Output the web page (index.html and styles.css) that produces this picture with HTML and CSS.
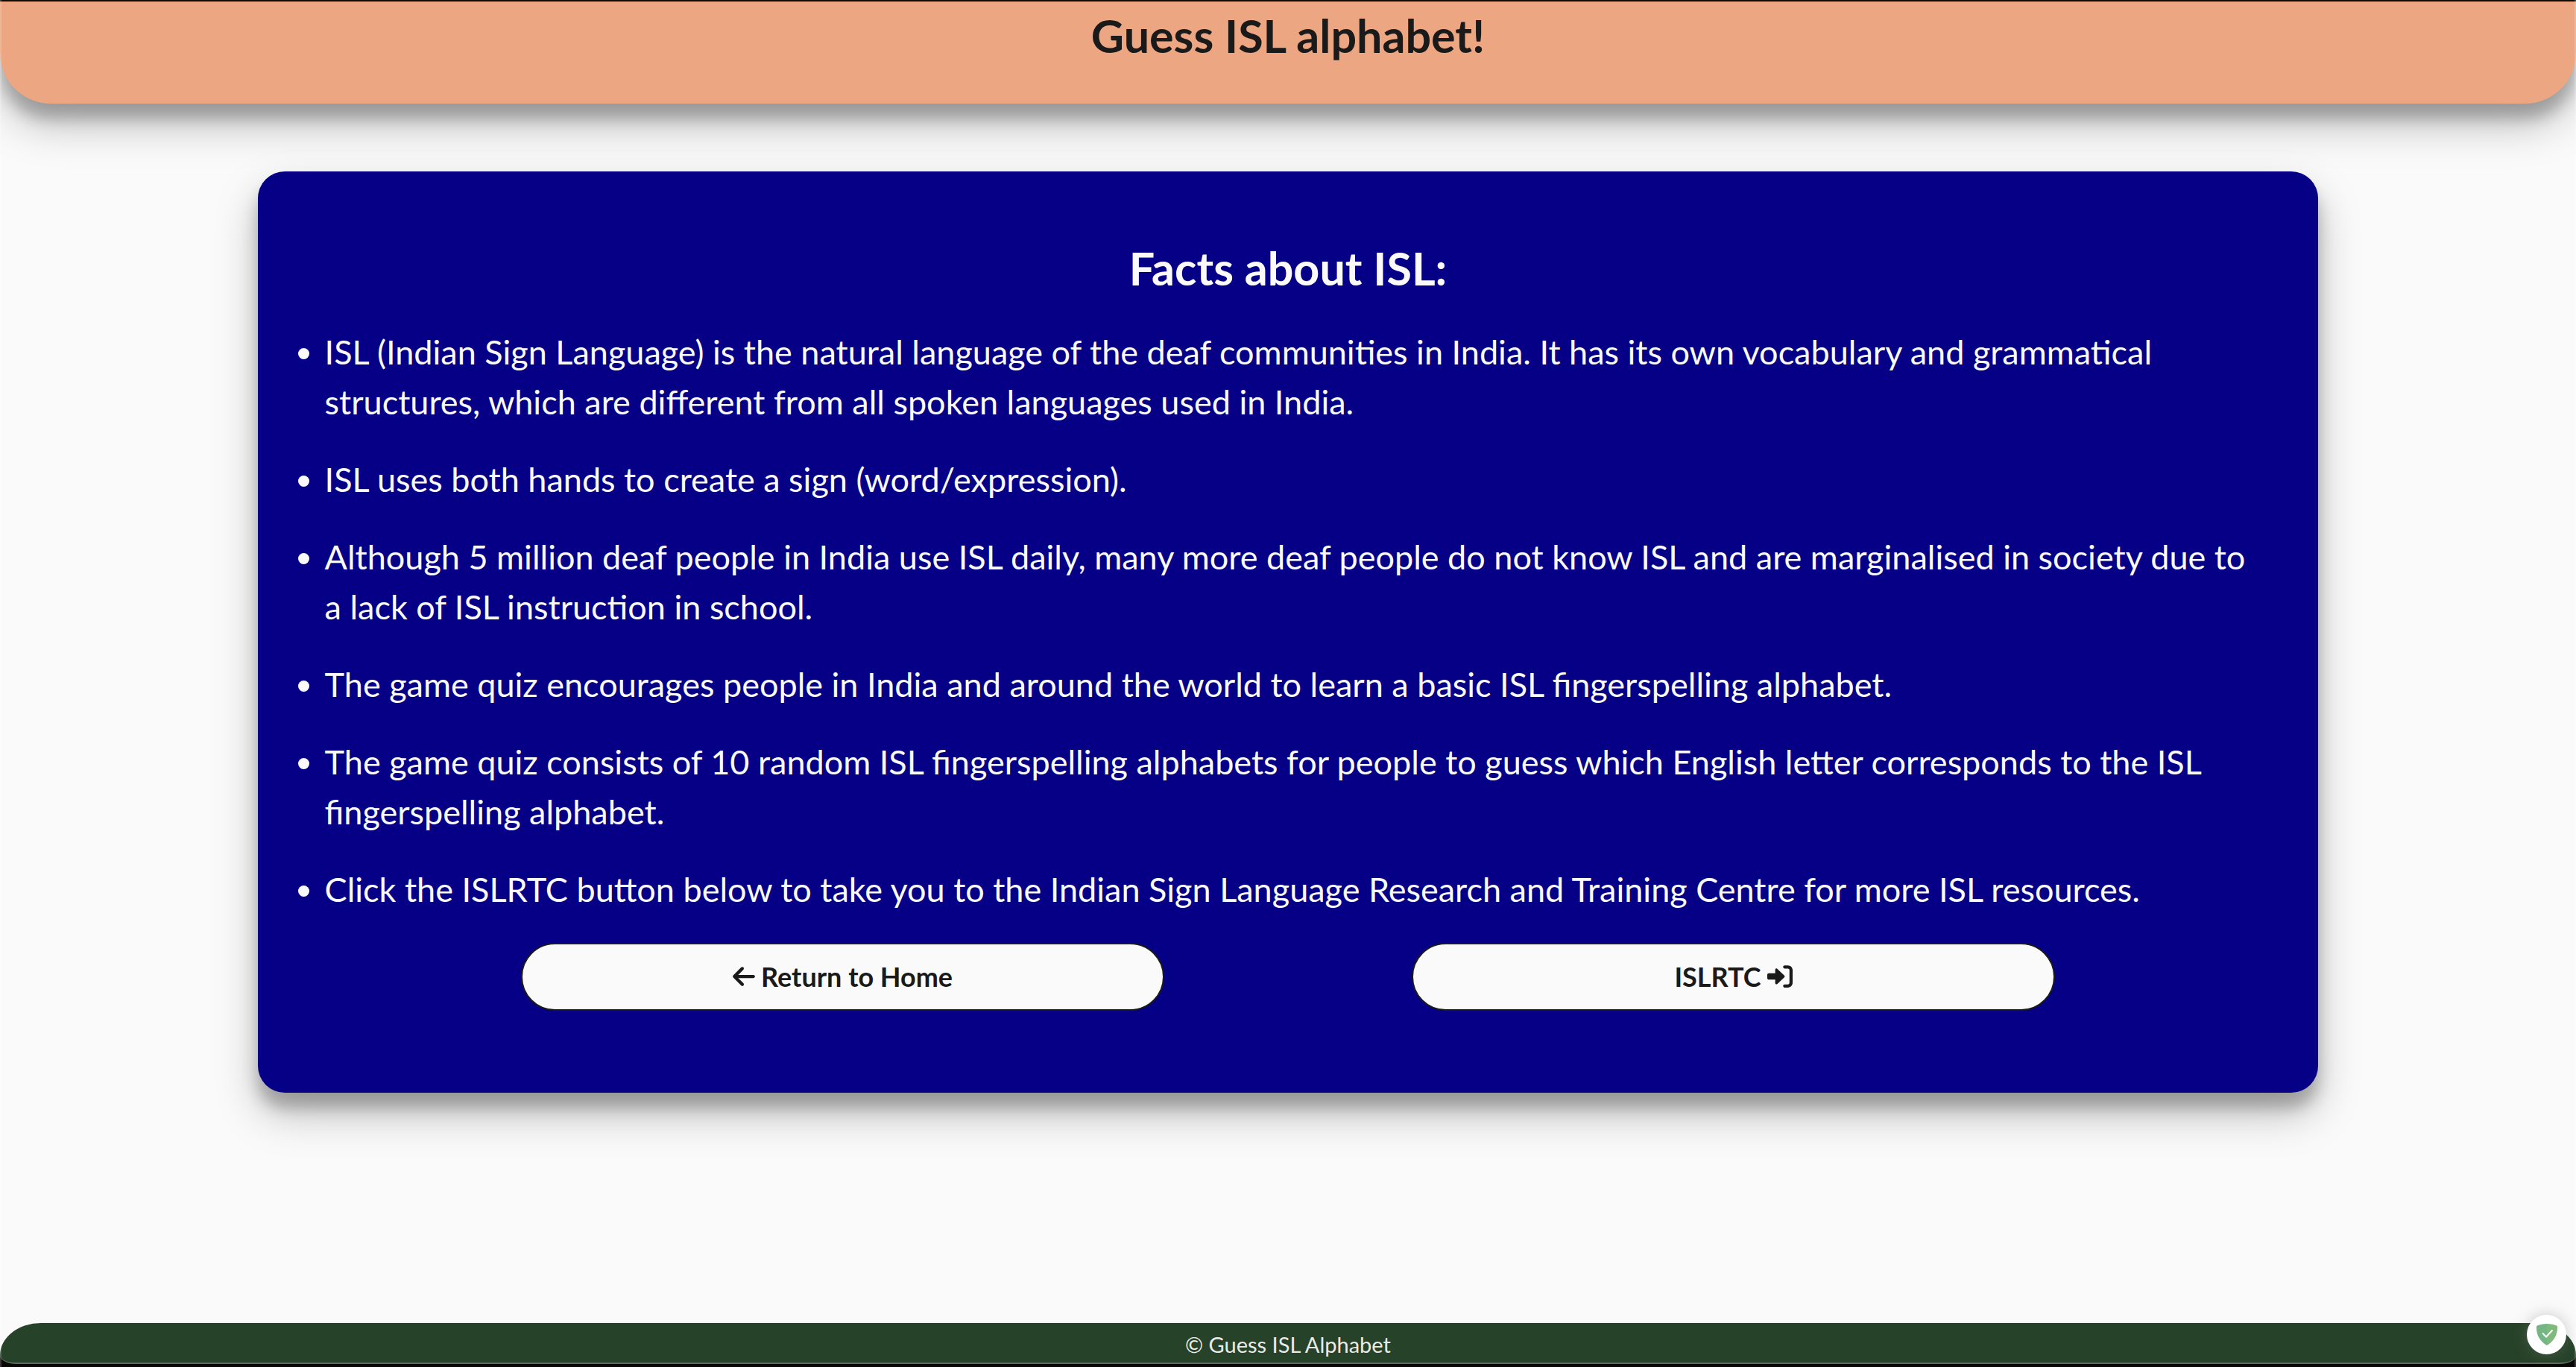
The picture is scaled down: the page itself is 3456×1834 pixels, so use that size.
FILE: index.html
```html
<!DOCTYPE html>
<html lang="en">
<head>
  <meta charset="utf-8">
  <meta name="viewport" content="width=device-width, initial-scale=1">
  <title>Guess ISL alphabet!</title>
  <link rel="stylesheet" href="styles.css">
</head>
<body>
  <header class="header">
    <h1 class="title">Guess ISL alphabet!</h1>
  </header>

  <main class="main">
    <section class="card">
      <h2 class="heading">Facts about ISL:</h2>
      <ul class="facts">
        <li>ISL (Indian Sign Language) is the natural language of the deaf communities in India. It has its own vocabulary and grammatical structures, which are different from all spoken languages used in India.</li>
        <li>ISL uses both hands to create a sign (word/expression).</li>
        <li>Although 5 million deaf people in India use ISL daily, many more deaf people do not know ISL and are marginalised in society due to a lack of ISL instruction in school.</li>
        <li>The game quiz encourages people in India and around the world to learn a basic ISL fingerspelling alphabet.</li>
        <li>The game quiz consists of 10 random ISL fingerspelling alphabets for people to guess which English letter corresponds to the ISL fingerspelling alphabet.</li>
        <li>Click the ISLRTC button below to take you to the Indian Sign Language Research and Training Centre for more ISL resources.</li>
      </ul>
      <div class="actions">
        <button class="button" type="button">
          <svg class="icon icon-arrow" viewBox="0 0 448 512" aria-hidden="true"><path fill="currentColor" d="M9.4 233.400c-12.500 12.500-12.500 32.800 0 45.300l160 160c12.500 12.500 32.800 12.500 45.300 0s12.500-32.800 0-45.300L109.200 288H416c17.700 0 32-14.300 32-32s-14.300-32-32-32H109.300l105.300-105.400c12.500-12.500 12.500-32.800 0-45.300s-32.800-12.500-45.300 0l-160 160z"/></svg>
          <span>Return to Home</span>
        </button>
        <button class="button" type="button">
          <span>ISLRTC</span>
          <svg class="icon" viewBox="0 0 512 512" aria-hidden="true"><path fill="currentColor" d="M352 96h64c17.700 0 32 14.300 32 32v256c0 17.700-14.300 32-32 32h-64c-17.700 0-32 14.300-32 32s14.300 32 32 32h64c53 0 96-43 96-96V128c0-53-43-96-96-96h-64c-17.700 0-32 14.300-32 32s14.300 32 32 32zm-7.500 177c4.800-4.500 7.500-10.800 7.500-17.400s-2.700-12.800-7.500-17.300l-144-136c-7-6.600-17.200-8.400-26-4.600S160 109.900 160 119.600V192H32c-17.700 0-32 14.300-32 32v64c0 17.700 14.300 32 32 32h128v72c0 9.600 5.700 18.200 14.500 22s19 2 26-4.600l144-136z"/></svg>
        </button>
      </div>
    </section>
  </main>

  <div class="footer-wrap">
    <footer class="footer">© Guess ISL Alphabet</footer>
  </div>

  <button class="badge" type="button" aria-label="Protection enabled">
    <svg class="shield" viewBox="0 0 28 29" aria-hidden="true">
      <path fill="#74b584" d="M14 0C9.500 0 4 1 0 3c0 5-.5 17 14 26z"/>
      <path fill="#7fba7c" d="M14 0c4.500 0 10 1 14 3 0 5 .5 17-14 26z"/>
      <path fill="none" stroke="#fff" stroke-width="2" d="M8 12.500l5 5L21.500 8.500"/>
    </svg>
  </button>
</body>
</html>
```
FILE: styles.css
```css
:root {
  --paper: #fafafa;
  --ink: #1a1a1a;
  --shadow: 0 28px 56px rgba(0, 0, 0, 0.25), 0 20px 20px rgba(0, 0, 0, 0.22);
}

* {
  box-sizing: border-box;
  margin: 0;
  padding: 0;
}

body {
  display: flex;
  flex-direction: column;
  min-height: 100vh;
  border-top: 2px solid #110b08;
  background: var(--paper);
  color: var(--ink);
  font-family: Lato, sans-serif;
  font-size: 45px;
}

/* faint window edges */
body::after {
  content: "";
  position: fixed;
  inset: 0;
  border: solid rgba(255, 255, 255, 0.2);
  border-width: 0 2px;
  pointer-events: none;
}

.header {
  padding: 12px 24px 57px;
  border-radius: 0 0 68px 68px;
  background: #eca681;
  box-shadow: var(--shadow);
  text-align: center;
}

.title,
.heading {
  font-size: 61px;
  line-height: 68px;
}

.main {
  flex: 1;
  padding: 91px 10% 40px;
}

.card {
  padding: 96px 90px 110px;
  border-radius: 36px;
  background: #050086;
  box-shadow: var(--shadow);
  color: var(--paper);
}

.heading {
  margin-bottom: 45px;
  text-align: center;
}

.facts {
  display: grid;
  gap: 37px;
  line-height: 67px;
}

.actions {
  display: grid;
  grid-template-columns: 1fr 1fr;
  gap: 332px;
  width: 80%;
  margin: 38px auto 0;
  padding: 0 5px;
}

.button {
  display: flex;
  align-items: center;
  justify-content: center;
  gap: 8px;
  height: 91px;
  padding-bottom: 2px;
  border: 2px solid var(--ink);
  border-radius: 46px;
  background: var(--paper);
  color: var(--ink);
  font: bold 36px/40px Lato, sans-serif;
}

.icon {
  width: 34px;
  height: 34px;
}

.icon-arrow {
  width: 30px;
}

.footer-wrap {
  padding-bottom: 4px;
  background: linear-gradient(var(--paper) 42px, #0a0605 42px);
}

.footer {
  padding: 10px 0 5px;
  border-bottom: 2px solid #55705a;
  border-radius: 56px 56px 22px 22px / 44px 44px 12px 12px;
  background: #264228;
  color: #eaeaea;
  font-size: 29px;
  line-height: 38px;
  text-align: center;
}

.badge {
  position: fixed;
  right: 13px;
  bottom: 17px;
  display: grid;
  place-items: center;
  width: 53px;
  height: 53px;
  border: 0;
  border-radius: 50%;
  background: #fff;
  box-shadow: 0 0 20px rgba(128, 128, 128, 0.4);
}

.shield {
  width: 28px;
  height: 29px;
}
```
